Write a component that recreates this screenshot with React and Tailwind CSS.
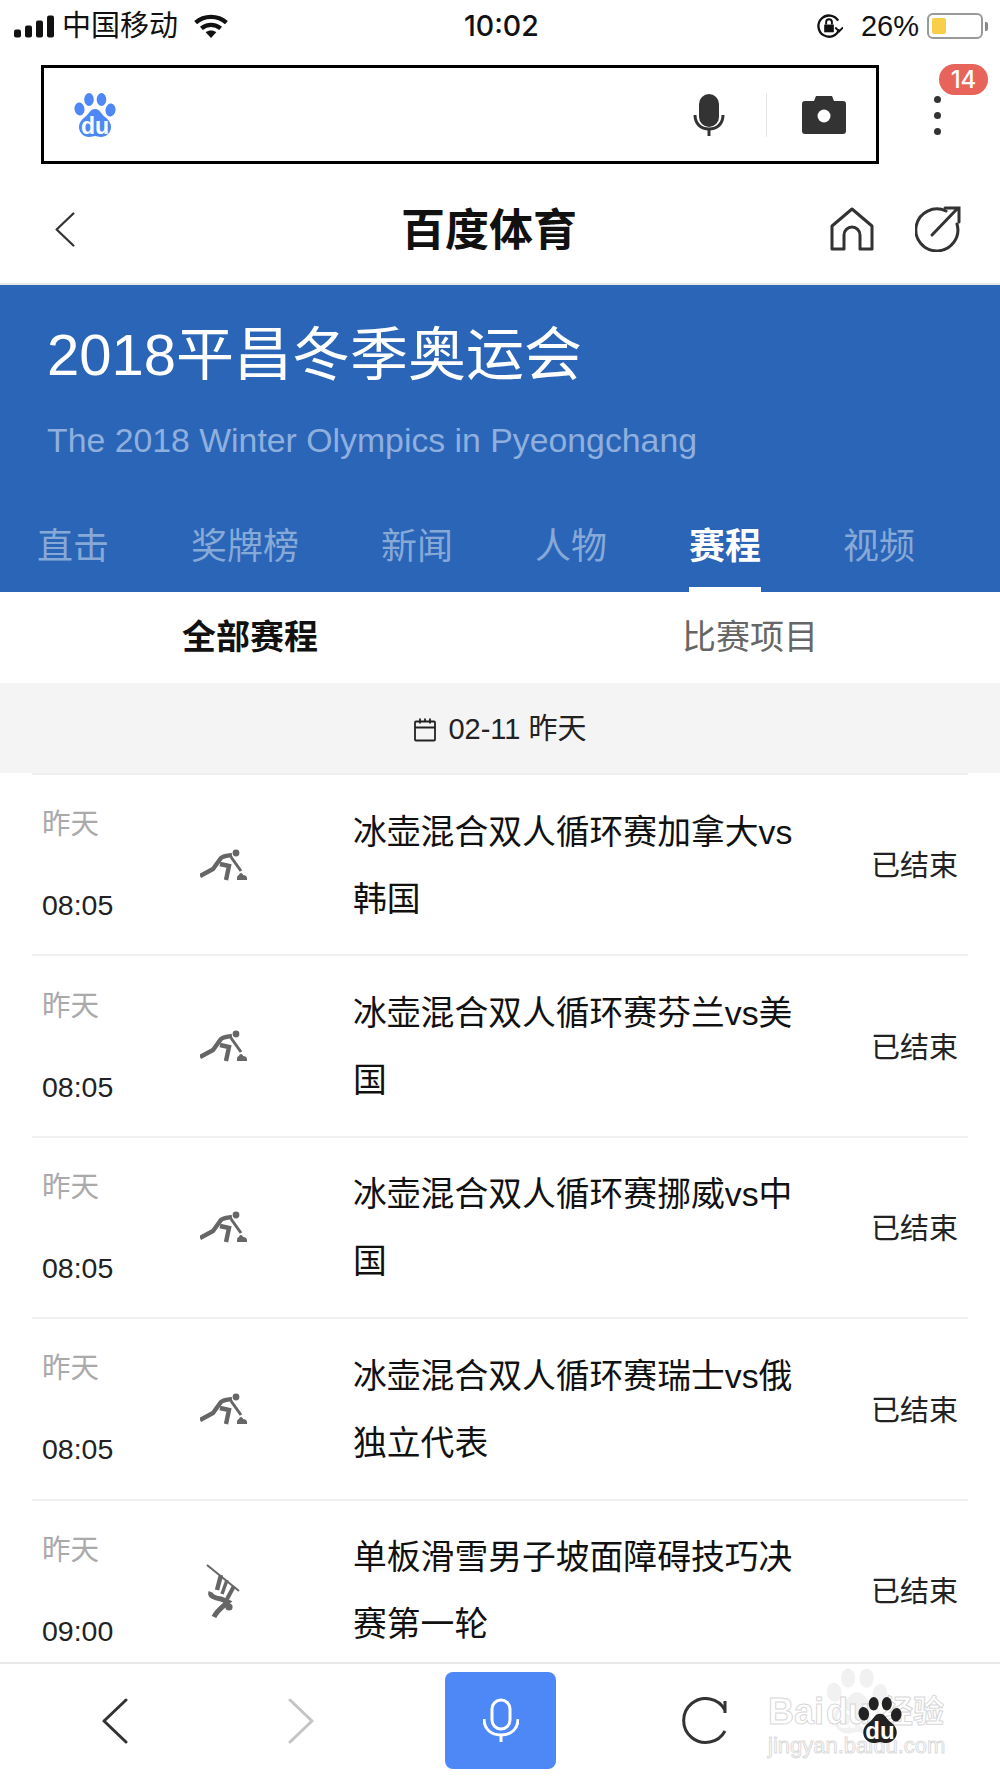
import React from 'react';

const rows = [
  { day: '昨天', time: '08:05', title: '冰壶混合双人循环赛加拿大vs韩国', sport: 'curling' },
  { day: '昨天', time: '08:05', title: '冰壶混合双人循环赛芬兰vs美国', sport: 'curling' },
  { day: '昨天', time: '08:05', title: '冰壶混合双人循环赛挪威vs中国', sport: 'curling' },
  { day: '昨天', time: '08:05', title: '冰壶混合双人循环赛瑞士vs俄独立代表', sport: 'curling' },
  { day: '昨天', time: '09:00', title: '单板滑雪男子坡面障碍技巧决赛第一轮', sport: 'snowboard' },
];

const tabs = ['直击', '奖牌榜', '新闻', '人物', '赛程', '视频'];

function Paw({ color = '#4e87f6', className = '' }) {
  return (
    <svg viewBox="0 0 42 44" className={className}>
      <ellipse cx="5.5" cy="16" rx="5" ry="6.5" fill={color} transform="rotate(-8 5.5 16)" />
      <ellipse cx="15" cy="6.5" rx="4.8" ry="6.5" fill={color} />
      <ellipse cx="27.5" cy="6.5" rx="4.8" ry="6.5" fill={color} />
      <ellipse cx="36.5" cy="17" rx="5" ry="6.5" fill={color} transform="rotate(8 36.5 17)" />
      <path d="M21 16c5 0 6 5 10 8 4 3 6 6 6 10 0 6-5 10-10 10-3 0-4-1-6-1s-3 1-6 1c-5 0-10-4-10-10 0-4 2-7 6-10 4-3 5-8 10-8z" fill={color} />
      <text x="21" y="40.5" textAnchor="middle" fontSize="23" fontWeight="700" fill="#fff" fontFamily="Liberation Sans">du</text>
    </svg>
  );
}

function Curling() {
  return (
    <svg viewBox="0 0 48 32" className="w-[48px] h-[32px]" fill="none" stroke="#666" strokeWidth="4.4">
      <circle cx="36" cy="4" r="3.4" fill="#666" stroke="none" />
      <path d="M0 27l13-7 8-11c2-2 4-2 11-3" />
      <path d="M20 15l9 2-3 14" />
      <path d="M31 8l10 14" strokeWidth="3" />
      <path d="M37 31v-2c0-2 1-3 2-3 0-1 1-2 2-2s2 1 2 2c2 0 4 1 4 3v2z" fill="#666" stroke="none" />
    </svg>
  );
}

function Snowboard() {
  return (
    <svg viewBox="0 0 40 56" className="w-[40px] h-[56px]" fill="none" stroke="#666">
      <path d="M3 3l32 26" strokeWidth="2" />
      <path d="M17 13l-4 15" strokeWidth="4.5" />
      <path d="M23 18l-5 14" strokeWidth="3.5" />
      <path d="M30 24l-8 15" strokeWidth="4" />
      <path d="M7 30c-2 4 4 6 10 7l7 3c-3 3-11 8-14 15" strokeWidth="5" />
      <circle cx="25" cy="45" r="3.6" fill="#666" stroke="none" />
    </svg>
  );
}

function Chevron({ dir = 'left', color = '#333', className = '' }) {
  return (
    <svg viewBox="0 0 26 46" className={className} fill="none" stroke={color} strokeWidth="3" strokeLinecap="round" strokeLinejoin="round">
      <path d={dir === 'left' ? 'M24 2L2 23l22 21' : 'M2 2l22 21L2 44'} />
    </svg>
  );
}

function Row({ row }) {
  return (
    <div className="mx-[32px] h-[181.4px] shrink-0 flex items-center border-b-2 border-[#f0f0f0]">
      <div className="w-[168px] pl-[10px] text-[28.5px]">
        <div className="mt-[1px] leading-[80px] text-[#aaaaaa]">{row.day}</div>
        <div className="leading-[82px] text-[#222]">{row.time}</div>
      </div>
      <div className="w-[48px] h-[60px] flex items-center justify-center">
        {row.sport === 'curling' ? <Curling /> : <Snowboard />}
      </div>
      <div className="ml-[105px] w-[446px] pt-[2px] text-[33.8px] leading-[67px] text-[#111]">{row.title}</div>
      <div className="ml-auto pr-[10px] pt-[5px] text-[29px] text-[#222]">已结束</div>
    </div>
  );
}

export default function App() {
  return (
    <div className="relative w-[1000px] h-[1778px] overflow-hidden flex flex-col bg-white font-['Liberation_Sans','Noto_Sans_CJK_SC',sans-serif]">
      {/* status bar */}
      <div className="h-[50px] shrink-0 relative flex items-center pl-[14px] pr-[12px] pt-[2px] text-[#111]">
        <svg viewBox="0 0 40 22" className="w-[40px] h-[23px]" fill="#111">
          <rect x="0" y="14" width="7" height="8" rx="2" />
          <rect x="11" y="10" width="7" height="12" rx="2" />
          <rect x="22" y="5" width="7" height="17" rx="2" />
          <rect x="33" y="0" width="7" height="22" rx="2" />
        </svg>
        <span className="ml-[8px] text-[29px] leading-none">中国移动</span>
        <svg viewBox="0 0 36 26" className="ml-[15px] w-[36px] h-[25px]" fill="none" stroke="#111" strokeWidth="4.5">
          <path d="M2 9c9-8 23-8 32 0" />
          <path d="M8 15c6-5 14-5 20 0" />
          <path d="M18 25l-5.5-6c3-2.5 8-2.5 11 0z" fill="#111" stroke="none" />
        </svg>
        <span className="absolute left-[464px] text-[28.5px] font-['Inter'] font-medium leading-none">10:02</span>
        <div className="ml-auto flex items-center">
          <svg viewBox="0 0 28 28" className="w-[27px] h-[27px]" fill="none" stroke="#111" strokeWidth="2.4">
            <path d="M24 17a11 11 0 1 1-1-9" />
            <path d="M20 15l4 4 4-4" strokeWidth="2" />
            <rect x="8.5" y="12" width="10" height="8" fill="#111" stroke="none" />
            <path d="M10.5 12V9.5a3 3 0 0 1 6 0V12" strokeWidth="2" />
          </svg>
          <span className="ml-[18px] text-[29px] leading-none">26%</span>
          <div className="ml-[8px] w-[56px] h-[26px] rounded-[6px] border-[2.5px] border-[#999] p-[3px] bg-white">
            <div className="w-[14px] h-full rounded-[2px] bg-[#f8cf46]" />
          </div>
          <div className="ml-[2px] w-[3px] h-[9px] bg-[#888] rounded-r-[2px]" />
        </div>
      </div>

      {/* search */}
      <div className="h-[125px] shrink-0 relative pl-[41px] pt-[15px]">
        <div className="w-[838px] h-[99px] border-[3px] border-black flex items-center pl-[30px] pr-[30px]">
          <Paw className="w-[42px] h-[44px]" />
          <svg viewBox="0 0 32 42" className="ml-auto w-[32px] h-[42px]" fill="none">
            <rect x="6" y="0" width="20" height="33" rx="10" fill="#333" />
            <path d="M2 21c0 9 6 14 14 14s14-5 14-14" stroke="#333" strokeWidth="3" />
            <path d="M16 35v7" stroke="#333" strokeWidth="3" />
          </svg>
          <div className="ml-[41px] w-px h-[44px] bg-[#e6e6e6]" />
          <svg viewBox="0 0 44 38" className="ml-[35px] w-[44px] h-[38px]">
            <path d="M3 5h9l2-5h16l2 5h9a3 3 0 0 1 3 3v27a3 3 0 0 1-3 3H3a3 3 0 0 1-3-3V8a3 3 0 0 1 3-3z" fill="#333" />
            <circle cx="22" cy="20" r="6.5" fill="#fff" />
          </svg>
        </div>
        <div className="absolute left-[934px] top-[46px] flex flex-col gap-[9px]">
          <span className="w-[7px] h-[7px] rounded-full bg-[#333]" />
          <span className="w-[7px] h-[7px] rounded-full bg-[#333]" />
          <span className="w-[7px] h-[7px] rounded-full bg-[#333]" />
        </div>
        <div className="absolute left-[939px] top-[14px] w-[49px] h-[31px] rounded-full bg-[#e8635a] text-white text-[24px] font-['Inter'] font-medium leading-[31px] text-center">14</div>
      </div>

      {/* title */}
      <div className="h-[110px] shrink-0 flex items-center pl-[55px] border-b-2 border-[#e8e8e8]">
        <Chevron className="w-[20px] h-[35px]" />
        <div className="ml-[326px] pt-[3px] text-[44px] font-bold text-[#111] leading-none">百度体育</div>
        <svg viewBox="0 0 44 44" className="ml-[253px] w-[44px] h-[44px]" fill="none" stroke="#333" strokeWidth="3" strokeLinejoin="round">
          <path d="M2 19L22 2l20 17v23H30V28a8 8 0 0 0-16 0v14H2z" />
        </svg>
        <svg viewBox="0 0 46 46" className="ml-[41px] w-[46px] h-[46px]" fill="none" stroke="#333" strokeWidth="3" strokeLinecap="round">
          <path d="M31 5A21 21 0 1 0 42 18" />
          <path d="M17 29L42 3M30 2h14v14" />
        </svg>
      </div>

      {/* olympics header */}
      <div className="h-[307px] shrink-0 bg-[#2b65b7] flex flex-col">
        <div className="pl-[47px] pt-[36px] text-[58px] leading-[68px] text-white">2018平昌冬季奥运会</div>
        <div className="pl-[47px] mt-[33px] text-[33.8px] leading-[36px] text-[#8fb0de]">The 2018 Winter Olympics in Pyeongchang</div>
        <div className="mt-auto pl-[37px] flex gap-[82px] h-[92px]">
          {tabs.map((t) => (
            <div key={t} className={t === '赛程' ? 'relative pt-[24px] text-[36px] leading-[46px] font-bold text-white' : 'pt-[24px] text-[36px] leading-[46px] text-[#87a9d8]'}>
              {t}
              {t === '赛程' && <div className="absolute left-0 right-0 bottom-0 h-[5px] bg-white" />}
            </div>
          ))}
        </div>
      </div>

      {/* sub tabs */}
      <div className="h-[91px] shrink-0 flex items-center text-[34px]">
        <div className="w-1/2 text-center font-bold text-[#111]">全部赛程</div>
        <div className="w-1/2 text-center text-[#666]">比赛项目</div>
      </div>

      {/* date bar */}
      <div className="h-[90px] shrink-0 bg-[#f4f4f4] flex items-center justify-center pt-[3px] text-[29px] text-[#222]">
        <svg viewBox="0 0 24 24" className="w-[24px] h-[25px] mr-[11px]" fill="none" stroke="#222" strokeWidth="1.8">
          <rect x="2" y="4" width="20" height="19" rx="1" />
          <path d="M2 10h20M7 1v5M12 1v3M17 1v5" />
        </svg>
        <span>02-11 昨天</span>
      </div>

      {/* list */}
      <div className="flex-1 min-h-0 overflow-hidden">
        <div className="mx-[32px] h-[2px] bg-[#eeeeee]" />
        {rows.map((r, i) => <Row key={i} row={r} />)}
      </div>

      {/* bottom bar */}
      <div className="h-[116px] shrink-0 border-t-2 border-[#e8e8e8] bg-white flex items-center pl-[102px]">
        <Chevron className="w-[26px] h-[46px]" />
        <Chevron dir="right" color="#c4c4c4" className="ml-[160px] w-[26px] h-[46px]" />
        <div className="ml-[131px] w-[111px] h-[97px] -mt-[2px] rounded-[8px] bg-[#4e87f6] flex items-center justify-center">
          <svg viewBox="0 0 36 44" className="w-[36px] h-[44px]" fill="none" stroke="#fff" strokeWidth="3">
            <rect x="9" y="2" width="18" height="29" rx="9" />
            <path d="M1 21c0 10 7 16 17 16s17-6 17-16" />
            <path d="M18 37v7" />
          </svg>
        </div>
        <svg viewBox="0 0 46 48" className="ml-[125px] w-[46px] h-[48px]" fill="none" stroke="#333" strokeWidth="3">
          <path d="M44 13A22 22 0 1 0 44 34" />
          <path d="M44 4v12" />
        </svg>
      </div>

      {/* watermark */}
      <div className="absolute left-[768px] top-[1668px] w-[180px] h-[105px]">
        <Paw color="#f1f1f1" className="absolute left-[58px] top-[0px] w-[62px] h-[66px]" />
        <div className="absolute left-0 top-[24px] flex items-center text-[36px] leading-[40px] font-bold text-white [-webkit-text-stroke:1px_#d8d8d8]">
          <span>Bai</span><span className="ml-[2px]">du</span><span className="ml-[12px] text-[31px]">经验</span>
        </div>
        <div className="absolute left-0 top-[66px] text-[22px] leading-[24px] text-white [-webkit-text-stroke:1px_#dcdcdc]">jingyan.baidu.com</div>
        <Paw color="#222" className="absolute left-[90px] top-[28px] w-[44px] h-[48px]" />
      </div>
    </div>
  );
}
